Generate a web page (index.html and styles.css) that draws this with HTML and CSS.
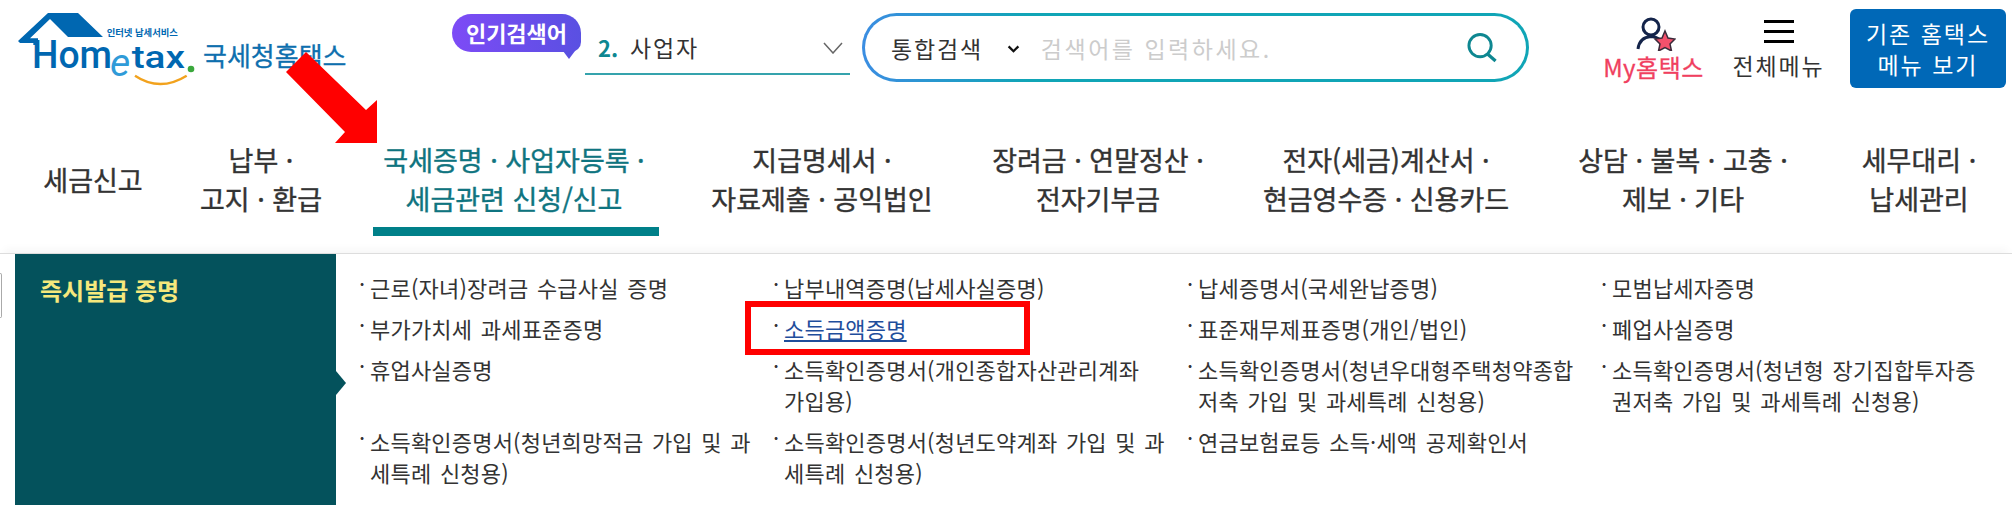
FILE: index.html
```html
<!DOCTYPE html>
<html lang="ko">
  <head>
    <meta charset="UTF-8" />
    <title>Hometax</title>
    <link rel="stylesheet" href="styles.css">
  </head>
  <body>
    <header class="top">
      <div class="brand">
        <svg class="logo" viewBox="0 0 570 270" width="190" height="90">
          <path d="M114 24H204L279 96H174L120 42L60 100H84V120H70V114H30L24 108Z" fill="#0067b1" />
          <text class="logo-small" x="290" y="92">인터넷 납세서비스</text>
          <text class="logo-hom" x="66" y="189" textLength="240" lengthAdjust="spacingAndGlyphs">Hom</text>
          <text class="logo-e" x="300" y="214">e</text>
          <text class="logo-tax" x="365" y="188" textLength="160" lengthAdjust="spacingAndGlyphs">tax</text>
          <circle cx="543" cy="192" r="10" fill="#3aa83c" />
          <path d="M375 212Q450 262 530 212" fill="none" stroke="#f2a21d" stroke-width="7" />
        </svg>
        <span class="brand-name">국세청홈택스</span>
      </div>
      <div class="popular">인기검색어</div>
      <div class="rank">
        <b>2.</b><span>사업자</span>
        <svg class="rank-arrow" viewBox="0 0 20 12" width="20" height="12">
          <path d="M1 1L10 11L19 1" fill="none" stroke="#666" stroke-width="1.5" />
        </svg>
      </div>
      <div class="search">
        <span class="search-type">통합검색</span>
        <svg class="search-caret" viewBox="0 0 14 9" width="13" height="8">
          <path d="M1.5 1.5L7 7L12.5 1.5" fill="none" stroke="#111" stroke-width="2.6" />
        </svg>
        <span class="search-hint">검색어를 입력하세요.</span>
        <svg class="search-icon" viewBox="0 0 32 32" width="32" height="31">
          <circle cx="14" cy="14" r="11.5" fill="none" stroke="#0e8791" stroke-width="3" />
          <path d="M22 23L30 30" stroke="#0e8791" stroke-width="3.4" />
        </svg>
      </div>
      <a class="my">
        <svg viewBox="0 0 40 34" width="40" height="34">
          <circle cx="15" cy="10" r="8" fill="none" stroke="#14244a" stroke-width="3" />
          <path d="M2 32C3 24 8 20 15 19.500C18 19.500 21 20.500 23 22" fill="none" stroke="#14244a" stroke-width="3" />
          <path d="M29 14L32 21L39 22L34 27L35.500 34L29 30.500L22.500 34L24 27L19 22L26 21Z" fill="#f4516c" stroke="#3a2a3a" stroke-width="1.500" />
        </svg>
        <span>My홈택스</span>
      </a>
      <a class="menu">
        <span class="burger"><i></i><i></i><i></i></span>
        <span>전체메뉴</span>
      </a>
      <a class="old-menu">기존 홈택스<br />메뉴 보기</a>
    </header>

    <nav class="gnb">
      <a>세금신고</a>
      <a>납부 ·<br />고지 · 환급</a>
      <a class="on">국세증명 · 사업자등록 ·<br />세금관련 신청/신고</a>
      <a>지급명세서 ·<br />자료제출 · 공익법인</a>
      <a>장려금 · 연말정산 ·<br />전자기부금</a>
      <a>전자(세금)계산서 ·<br />현금영수증 · 신용카드</a>
      <a>상담 · 불복 · 고충 ·<br />제보 · 기타</a>
      <a>세무대리 ·<br />납세관리</a>
    </nav>

    <div class="sub">
      <div class="side"><span class="side-tab"></span></div>
      <h3 class="sub-title">즉시발급 증명</h3>
      <ul class="sub-list">
        <li>근로(자녀)장려금 수급사실 증명</li>
        <li>납부내역증명(납세사실증명)</li>
        <li>납세증명서(국세완납증명)</li>
        <li>모범납세자증명</li>
        <li>부가가치세 과세표준증명</li>
        <li class="picked"><a>소득금액증명</a></li>
        <li>표준재무제표증명(개인/법인)</li>
        <li>폐업사실증명</li>
        <li>휴업사실증명</li>
        <li>소득확인증명서(개인종합자산관리계좌<br />가입용)</li>
        <li>소득확인증명서(청년우대형주택청약종합<br />저축 가입 및 과세특례 신청용)</li>
        <li>소득확인증명서(청년형 장기집합투자증<br />권저축 가입 및 과세특례 신청용)</li>
        <li>소득확인증명서(청년희망적금 가입 및 과<br />세특례 신청용)</li>
        <li>소득확인증명서(청년도약계좌 가입 및 과<br />세특례 신청용)</li>
        <li>연금보험료등 소득·세액 공제확인서</li>
      </ul>
    </div>

    <!-- annotations on top of the capture -->
    <svg class="red-arrow" viewBox="0 0 92 92" width="92" height="92">
      <path d="M20 0L80 58L91 48V91H49L59 80L0 20Z" fill="#ff0000" />
    </svg>
    <div class="red-box"></div>
  </body>
</html>
```

FILE: styles.css
```css
body {
  margin: 0;
  background: #fff;
  color: #333;
  font-family: "Noto Sans CJK KR", "Noto Sans", sans-serif;
  overflow: hidden;
}
a {
  color: inherit;
}
.top {
  display: flex;
  align-items: flex-start;
  height: 96px;
  padding-left: 10px;
}
.brand {
  display: flex;
  flex: none;
  width: 442px;
  margin-top: 5px;
}
.logo text {
  font-family: Roboto, sans-serif;
  fill: #0067b1;
}
.logo .logo-small {
  font-family: "Noto Sans CJK KR", sans-serif;
  font-size: 28px;
  font-weight: 700;
}
.logo .logo-hom {
  font-size: 118px;
  font-weight: 500;
}
.logo .logo-e {
  font-size: 118px;
  font-style: italic;
  fill: #2f9bd8;
}
.logo .logo-tax {
  font-size: 96px;
  font-weight: 500;
}
.brand-name {
  margin: 32px 0 0 3px;
  font-size: 26px;
  line-height: 36px;
  color: #0e6fae;
  -webkit-text-stroke: 0.3px #0e6fae;
}
.popular {
  position: relative;
  flex: none;
  width: 129px;
  height: 38px;
  margin-top: 14px;
  border-radius: 19px 19px 10px 19px;
  background: linear-gradient(90deg, #7d4bf6, #5a50e2);
  color: #fff;
  font-size: 22px;
  font-weight: 700;
  line-height: 36px;
  text-align: center;
}
.popular::after {
  content: "";
  position: absolute;
  right: 6px;
  bottom: -7px;
  border-top: 8px solid #5a50e2;
  border-left: 6px solid transparent;
  border-right: 6px solid transparent;
}
.rank {
  display: flex;
  align-items: flex-end;
  flex: none;
  width: 245px;
  height: 64px;
  margin-left: 4px;
  padding: 0 7px 9px 13px;
  border-bottom: 2px solid #35a3ad;
  font-size: 23px;
  line-height: 34px;
}
.rank b {
  width: 32px;
  color: #0e8791;
  font-size: 22px;
}
.rank span {
  letter-spacing: 1.8px;
  color: #333;
}
.rank-arrow {
  margin: 0 0 10px auto;
}
.search {
  display: flex;
  align-items: center;
  flex: none;
  width: 667px;
  height: 69px;
  margin: 13px 0 0 12px;
  padding: 0 26px;
  box-sizing: border-box;
  border: 3px solid transparent;
  border-radius: 35px;
  background: linear-gradient(#fff, #fff) padding-box,
    linear-gradient(90deg, #3b8de2, #10a5b6 25%) border-box;
  font-size: 23px;
}
.search-type {
  letter-spacing: 1.8px;
}
.search-caret {
  margin: 2px 0 0 24px;
}
.search-hint {
  margin-left: 21px;
  color: #ccc;
  letter-spacing: 2.5px;
}
.search-icon {
  margin-left: auto;
  margin-right: 2px;
}
.my,
.menu {
  display: flex;
  flex-direction: column;
  align-items: center;
  flex: none;
  font-size: 23px;
  line-height: 30px;
  white-space: nowrap;
}
.my {
  width: 103px;
  margin: 17px 0 0 73px;
  color: #f0405f;
  font-size: 24px;
  letter-spacing: 0.5px;
  -webkit-text-stroke: 0.3px #f0405f;
}
.my svg {
  margin: 0 0 1px 4px;
}
.menu {
  width: 91px;
  margin: 20px 0 0 28px;
  color: #333;
  letter-spacing: 1.8px;
}
.burger {
  display: flex;
  flex-direction: column;
  gap: 7px;
  width: 30px;
  margin-bottom: 7px;
}
.burger i {
  height: 3px;
  background: #000;
}
.old-menu {
  flex: none;
  width: 156px;
  height: 79px;
  margin: 9px 0 0 26px;
  padding-top: 9px;
  box-sizing: border-box;
  border-radius: 6px;
  background: #0068b7;
  color: #fff;
  font-size: 23px;
  line-height: 31px;
  letter-spacing: 2px;
  text-align: center;
}
.gnb {
  display: grid;
  grid-template-columns: 162px 174px 332px 284px 268px 308px 286px 186px;
  height: 157px;
  padding: 44px 0 0 12px;
  box-sizing: border-box;
  color: #333;
  font-size: 27px;
  line-height: 39px;
  text-align: center;
  -webkit-text-stroke: 0.4px;
}
.gnb a {
  align-self: start;
  display: flex;
  align-items: center;
  justify-content: center;
  height: 78px;
}
.gnb .on {
  position: relative;
  color: #0f7480;
}
.gnb .on::after {
  content: "";
  position: absolute;
  left: 25px;
  right: 21px;
  top: 87px;
  height: 9px;
  background: #008089;
}
.sub {
  display: flex;
  height: 252px;
  border-top: 1px solid #ddd;
  box-shadow: 0 -8px 8px -4px #f7f7f7;
}
.side {
  flex: none;
  width: 15px;
  padding-top: 19px;
}
.side-tab {
  display: block;
  width: 1px;
  height: 43px;
  border: 1px solid #aaa;
  border-left: 0;
  border-radius: 0 4px 4px 0;
}
.sub-title {
  position: relative;
  flex: none;
  width: 321px;
  margin: 0;
  padding: 19px 0 0 25px;
  box-sizing: border-box;
  background: #04525c;
  color: #f6e87c;
  font-size: 24px;
  line-height: 34px;
  font-weight: 700;
}
.sub-title::after {
  content: "";
  position: absolute;
  left: 100%;
  top: 117px;
  border-left: 10px solid #04525c;
  border-top: 12px solid transparent;
  border-bottom: 12px solid transparent;
}
.sub-list {
  display: grid;
  grid-template-columns: repeat(4, 414px);
  align-content: start;
  row-gap: 10px;
  margin: 0;
  padding: 18px 0 0 23px;
  list-style: none;
  font-size: 22px;
  line-height: 31px;
  letter-spacing: 0.2px;
  word-spacing: 2.2px;
  color: #333;
}
.sub-list li {
  position: relative;
  padding-left: 11px;
  white-space: nowrap;
}
.sub-list li::before {
  content: "·";
  position: absolute;
  left: 0;
  top: -4px;
}
.sub-list .picked a {
  color: #1f4e9c;
  text-decoration: underline;
}
.red-arrow {
  position: absolute;
  left: 286px;
  top: 52px;
}
.red-box {
  position: absolute;
  left: 745px;
  top: 301px;
  width: 273px;
  height: 42px;
  border: 6px solid #f00;
}
```
